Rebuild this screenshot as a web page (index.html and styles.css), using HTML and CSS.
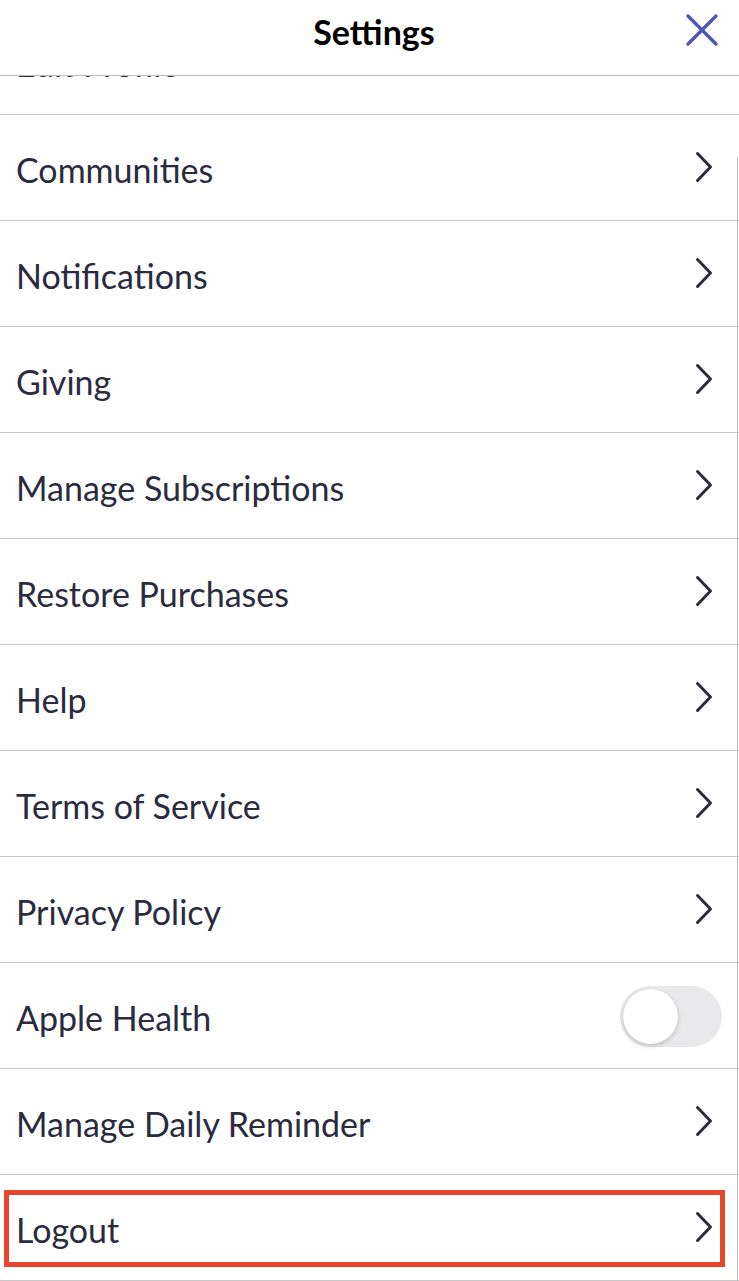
FILE: index.html
```html
<!DOCTYPE html>
<html lang="en">

<head>
    <meta charset="UTF-8">
    <meta name="viewport" content="width=device-width, initial-scale=1.0">
    <title>Settings</title>
    <link rel="stylesheet" href="styles.css">
</head>

<body>
    <div class="top-bar">
        <h1 class="title">Settings</h1>
        <button class="close-btn" aria-label="Close">
            <svg width="34" height="34" viewBox="0 0 34 34">
                <path d="M3 3 L31 31 M31 3 L3 31" stroke="#4b56b8" stroke-width="3.4" stroke-linecap="round" fill="none"/>
            </svg>
        </button>
    </div>

    <div class="scroll-line"></div>

    <ul class="menu">
        <li class="menu-item"><span class="label">Edit Profile</span><span class="chev"></span></li>
        <li class="menu-item"><span class="label">Communities</span><span class="chev"></span></li>
        <li class="menu-item"><span class="label">Notifications</span><span class="chev"></span></li>
        <li class="menu-item"><span class="label">Giving</span><span class="chev"></span></li>
        <li class="menu-item"><span class="label">Manage Subscriptions</span><span class="chev"></span></li>
        <li class="menu-item"><span class="label">Restore Purchases</span><span class="chev"></span></li>
        <li class="menu-item"><span class="label">Help</span><span class="chev"></span></li>
        <li class="menu-item"><span class="label">Terms of Service</span><span class="chev"></span></li>
        <li class="menu-item"><span class="label">Privacy Policy</span><span class="chev"></span></li>
        <li class="menu-item">
            <span class="label">Apple Health</span>
            <label class="switch">
                <input type="checkbox">
                <span class="knob"></span>
            </label>
        </li>
        <li class="menu-item"><span class="label">Manage Daily Reminder</span><span class="chev"></span></li>
        <li class="menu-item logout">
            <span class="label">Logout</span><span class="chev"></span>
            <span class="highlight"></span>
        </li>
    </ul>

    <script>
        // the same chevron for every row
        const chevron = '<svg width="18" height="32" viewBox="0 0 18 32"><path d="M2.5 2.5 L15.5 16 L2.5 29.5" stroke="#2a2b3e" stroke-width="3" stroke-linecap="round" stroke-linejoin="round" fill="none"/></svg>';
        document.querySelectorAll('.chev').forEach(el => {
            el.innerHTML = chevron;
        });
    </script>
</body>

</html>
```

FILE: styles.css
```css
* {
    margin: 0;
    padding: 0;
    box-sizing: border-box;
}

body {
    font-family: Lato, "Noto Sans", sans-serif;
    background-color: #fff;
    overflow: hidden;
}

.top-bar {
    position: fixed;
    top: 0;
    left: 0;
    right: 0;
    height: 76px;
    background-color: #fff;
    border-bottom: 1px solid #bdbdbd;
    display: flex;
    justify-content: center;
    align-items: center;
    z-index: 2;
}

.title {
    font-size: 34px;
    font-weight: 700;
    color: #000;
    margin-top: -12px;
    padding-left: 9px;
}

.close-btn {
    position: absolute;
    right: 20px;
    top: 13px;
    border: none;
    background: transparent;
    display: flex;
}

.scroll-line {
    position: fixed;
    right: 1px;
    top: 158px;
    bottom: 0;
    width: 1px;
    background-color: #b8b8b8;
    z-index: 1;
}

.menu {
    list-style: none;
    margin-top: 9px;
}

.menu-item {
    position: relative;
    height: 106px;
    border-bottom: 1px solid #c8c8c8;
    display: flex;
    align-items: center;
    justify-content: space-between;
    padding: 0 26px 0 16px;
}

.label {
    font-size: 34px;
    color: #2a2b3e;
    margin-top: 3px;
}

.chev {
    display: flex;
    margin-top: -2px;
}

.switch {
    position: relative;
    width: 102px;
    height: 61px;
    margin-right: -9px;
    margin-top: 2px;
}

.switch input {
    display: none;
}

.switch .knob {
    position: absolute;
    inset: 0;
    border-radius: 31px;
    background-color: #e9e9eb;
}

.switch .knob::before {
    content: "";
    position: absolute;
    left: 3px;
    top: 3px;
    width: 55px;
    height: 55px;
    border-radius: 50%;
    background-color: #fff;
    box-shadow: 0 2px 5px rgba(0, 0, 0, 0.18), 0 0 1px rgba(0, 0, 0, 0.12);
}

.logout .highlight {
    position: absolute;
    left: 4px;
    top: 15px;
    width: 721px;
    height: 77px;
    border: 5px solid #e8452c;
    pointer-events: none;
}
```
